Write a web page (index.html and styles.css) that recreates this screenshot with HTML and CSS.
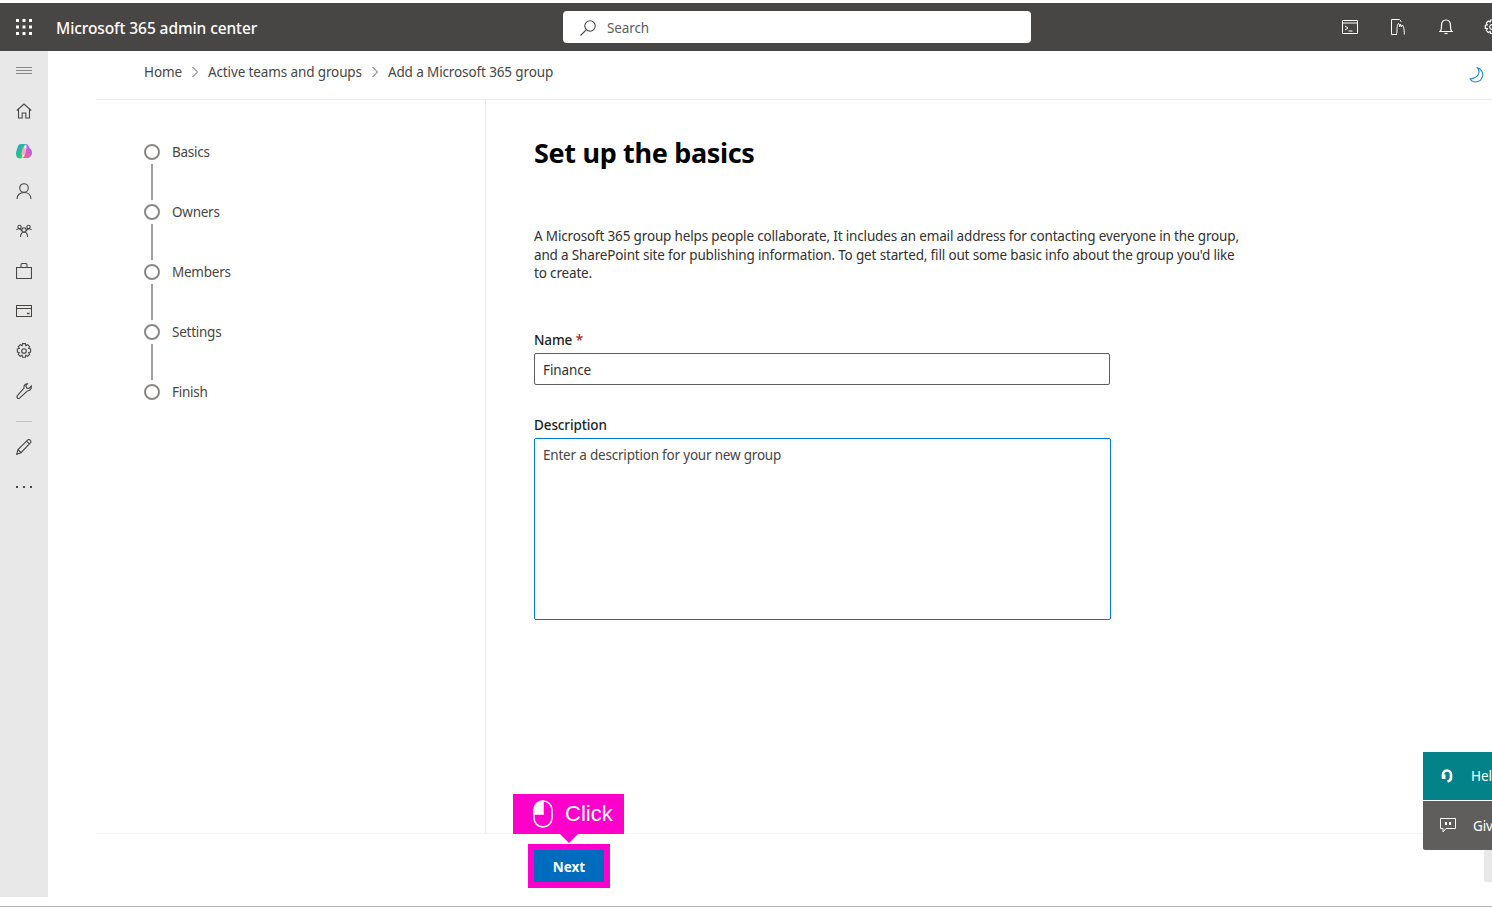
FILE: index.html
```html
<!DOCTYPE html>
<html lang="en">
<head>
    <meta charset="UTF-8">
    <title>Microsoft 365 admin center</title>
    <link rel="stylesheet" href="styles.css">
</head>
<body>
<div class="page">
    <header class="topbar">
        <div class="topbar-left">
            <svg class="waffle" width="16" height="16" viewBox="0 0 16 16" fill="#fff">
                <rect x="0" y="0" width="3" height="3"/><rect x="6.500" y="0" width="3" height="3"/><rect x="13" y="0" width="3" height="3"/>
                <rect x="0" y="6.500" width="3" height="3"/><rect x="6.500" y="6.500" width="3" height="3"/><rect x="13" y="6.500" width="3" height="3"/>
                <rect x="0" y="13" width="3" height="3"/><rect x="6.500" y="13" width="3" height="3"/><rect x="13" y="13" width="3" height="3"/>
            </svg>
            <span class="app-name">Microsoft 365 admin center</span>
        </div>
        <div class="search">
            <svg width="18" height="18" viewBox="0 0 18 18" fill="none" stroke="#484644" stroke-width="1.100">
                <circle cx="11" cy="7" r="5.200"/><path d="M7.200 10.800 1.500 16.500"/>
            </svg>
            <span>Search</span>
        </div>
        <div class="topbar-icons">
            <svg width="16" height="14" viewBox="0 0 16 14" fill="none" stroke="#fff"><path d="M.5.500h15v13H.5zM.5 3h15"/><path d="m3 6 3 2-3 2M6.500 11h4"/></svg>
            <svg width="16" height="16" viewBox="0 0 16 16" fill="none" stroke="#fff"><path d="M7 15.500H1.500V.5h8l1.500 1.500v1"/><path d="M6 15.500c1-1 1-3 1-5s.5-6 1.500-6 1 2.500 1 3.500l1-3 .8 3 1-2c1 1 2 3 2 9.500"/></svg>
            <svg class="bell" width="14" height="16" viewBox="0 0 14 16" fill="none" stroke="#fff" stroke-width="1.200"><path d="M1 12.500h12c-1.500-1-1.500-3-1.500-6C11.500 3 10 1 7 1S2.500 3 2.500 6.500c0 3 0 5-1.500 6Z"/><path d="M5.500 14.500h3"/></svg>
            <svg class="gear-cut" width="16" height="16" viewBox="0 0 16 16" fill="none" stroke="#fff" stroke-width="1.200"><circle cx="8" cy="8" r="2.300"/><path d="M6.600 1h2.800l.4 2 1.800-.9 2 2-1 1.800 2 .5v2.800l-2 .5 1 1.800-2 2-1.800-1-.4 2H6.600l-.5-2-1.800 1-2-2 1-1.800-2-.5V6.400l2-.5-1-1.800 2-2 1.800.9z"/></svg>
        </div>
    </header>

    <div class="shell">
        <nav class="sidenav">
            <div class="nav-item"><svg width="16" height="8" viewBox="0 0 16 8" stroke="#8a8886"><path d="M0 .5h16M0 3.500h16M0 6.500h16"/></svg></div>
            <div class="nav-item"><svg width="16" height="16" viewBox="0 0 16 16" fill="none" stroke="#484644" stroke-width="1.100"><path d="M.8 7.500 8 1l7.200 6.500M2.500 6v9h3.700v-5h3.600v5h3.700V6"/></svg></div>
            <div class="nav-item"><svg width="16" height="16" viewBox="0 0 16 16">
                <defs>
                    <linearGradient id="cop1" x1="0" y1="0" x2="1" y2="1"><stop offset="0" stop-color="#1fa5e0"/><stop offset="0.600" stop-color="#2fc27a"/><stop offset="1" stop-color="#f2b632"/></linearGradient>
                    <linearGradient id="cop2" x1="0" y1="1" x2="1" y2="0"><stop offset="0" stop-color="#f0743e"/><stop offset="0.500" stop-color="#d85ad0"/><stop offset="1" stop-color="#8a6cf0"/></linearGradient>
                </defs>
                <path d="M5 1h6c-2 .5-3 2-3.500 4L6 14c-.3 1-1 1.500-2.500 1.500C1.500 15.500 0 13.500 0 11c0-1.500.3-3 .8-4.500L2 3C2.500 1.800 3.500 1 5 1Z" fill="url(#cop1)"/>
                <path d="M10 1c1 0 1.800.5 2.200 1.500L14 5.500c1.500 1 2 2.500 2 4 0 3-2 5.500-4.500 5.500H5.500c1.500 0 2.500-1 3-2.500L10.500 5c.2-1.500 0-3-.5-4Z" fill="url(#cop2)"/>
                <path d="M6.500 5.500h3.700L9 11.500H5.200Z" fill="#f6a7c8"/>
            </svg></div>
            <div class="nav-item"><svg width="16" height="16" viewBox="0 0 16 16" fill="none" stroke="#484644" stroke-width="1.100"><circle cx="8" cy="5" r="4.300"/><path d="M1 16c0-4 3-6.500 7-6.500s7 2.500 7 6.500"/></svg></div>
            <div class="nav-item"><svg width="16" height="14" viewBox="0 0 16 14" fill="none" stroke="#484644" stroke-width="1.100"><circle cx="3.500" cy="3" r="1.700"/><circle cx="12.500" cy="3" r="1.700"/><circle cx="8" cy="6" r="2.200"/><path d="M.5 6c.5-1 1.500-1.300 3-1.200L6 6.500M15.500 6c-.5-1-1.500-1.300-3-1.200L10 6.500M4.500 13c0-3 1.500-5 3.500-5s3.500 2 3.500 5"/></svg></div>
            <div class="nav-item"><svg width="16" height="16" viewBox="0 0 16 16" fill="none" stroke="#484644" stroke-width="1.100"><path d="M.5 4.500h15v11H.5zM5 4.500V2c0-.8.500-1.500 1.500-1.500h3C10.500.5 11 1.200 11 2v2.500"/></svg></div>
            <div class="nav-item"><svg width="16" height="12" viewBox="0 0 16 12" fill="none" stroke="#484644" stroke-width="1.100"><path d="M.5.500h15v11H.5zM.5 3.500h15"/><path d="M11 8.500h2.500" stroke-width="1.500"/></svg></div>
            <div class="nav-item"><svg width="16" height="16" viewBox="0 0 16 16" fill="none" stroke="#484644" stroke-width="1.100"><circle cx="8" cy="8" r="2.300"/><path d="M6.600 .6h2.800l.4 2 1.800-.9 2 2-1 1.800 2 .5v3l-2 .5 1 1.800-2 2-1.800-1-.4 2H6.600l-.5-2-1.800 1-2-2 1-1.800-2-.5V6l2-.5-1-1.800 2-2 1.800.9z"/></svg></div>
            <div class="nav-item"><svg width="16" height="16" viewBox="0 0 16 16" fill="none" stroke="#484644" stroke-width="1.100"><path d="M11.500.7 9.800 3l1 2.200 2.200.2L15.300 3c.5 2.500-1.200 5-4 5L3.500 15.200c-1.200 1-3.400-.8-2.300-2.400L8 5c-.3-2.500 1-4.300 3.500-4.300Z"/></svg></div>
            <span class="nav-sep"></span>
            <div class="nav-item"><svg width="16" height="16" viewBox="0 0 16 16" fill="none" stroke="#484644" stroke-width="1.100"><path d="M.7 15.300 2 10.500 11.800.9c.8-.6 1.800-.4 2.500.4.7.8.9 1.700.3 2.400L5 13.700ZM2 10.500 5 13.700M10.500 2.200l3.200 3"/></svg></div>
            <div class="nav-item"><svg width="16" height="2" viewBox="0 0 16 2" fill="#484644"><rect x="0" width="2" height="2"/><rect x="7" width="2" height="2"/><rect x="14" width="2" height="2"/></svg></div>
        </nav>

        <main class="main">
            <div class="crumbs">
                <span>Home</span>
                <svg width="8" height="12" viewBox="0 0 8 12" fill="none" stroke="#605e5c"><path d="m1.500 1 5 5-5 5"/></svg>
                <span>Active teams and groups</span>
                <svg width="8" height="12" viewBox="0 0 8 12" fill="none" stroke="#605e5c"><path d="m1.500 1 5 5-5 5"/></svg>
                <span>Add a Microsoft 365 group</span>
                <svg class="moon" width="16" height="16" viewBox="0 0 16 16" fill="none" stroke="#1e88e5" stroke-width="1.100"><path d="M9.500 .8c2.800 3.500 2 10-7.500 11.200 1.800 2.500 5 3.600 8 2.600 4.500-1.500 6-7.500 3.500-11C12.500 2.200 11 1.200 9.500 .8Z"/></svg>
            </div>

            <div class="wizard">
                <ol class="steps">
                    <li class="step">Basics</li>
                    <li class="step">Owners</li>
                    <li class="step">Members</li>
                    <li class="step">Settings</li>
                    <li class="step">Finish</li>
                </ol>
                <section class="form">
                    <h1>Set up the basics</h1>
                    <p class="intro">A Microsoft 365 group helps people collaborate, It includes an email address for contacting everyone in the group, and a SharePoint site for publishing information. To get started, fill out some basic info about the group you'd like to create.</p>
                    <label class="field-label">Name <span class="req">*</span></label>
                    <div class="input">Finance</div>
                    <label class="field-label desc-label">Description</label>
                    <div class="textarea">Enter a description for your new group</div>
                </section>
            </div>

            <footer class="actions">
                <button class="next">Next</button>
            </footer>
        </main>
    </div>
    <div class="bottom-line"></div>

    <div class="callout">
        <svg width="20" height="28" viewBox="0 0 20 28" fill="none" stroke="#fff" stroke-width="1.500"><path d="M10 1a9 9 0 0 0-9 9v4h9z" fill="#fff"/><rect x="1" y="1" width="18" height="26" rx="9"/></svg>
        <span>Click</span>
    </div>
    <div class="help-tabs">
        <div class="help-tab teal">
            <svg width="14" height="16" viewBox="0 0 14 16" fill="none" stroke="#fff" stroke-width="2.600"><path d="M3 10.500V6.500a4 4 0 0 1 8 0V10c0 2-1.500 3-3.500 3.500"/><path d="M2 6.500h3.500v4.500H2z" fill="#fff" stroke="none"/></svg>
            <span>Help &amp; support</span>
        </div>
        <div class="help-tab grey">
            <svg width="16" height="15" viewBox="0 0 16 15" fill="none" stroke="#fff"><path d="M.5.500h15v10H6L3 14v-3.500H.5z"/><path d="M6 4v3M10 4v3" stroke-width="2"/></svg>
            <span>Give feedback</span>
        </div>
    </div>
    <div class="scroll-stub"></div>
</div>
</body>
</html>
```

FILE: styles.css
```css
* {
    margin: 0;
    padding: 0;
    box-sizing: border-box;
    list-style: none;
}

html, body {
    width: 1492px;
    height: 907px;
    overflow: hidden;
    background: #fff;
}

body {
    font-family: "Noto Sans", "Open Sans", sans-serif;
    font-size: 13.500px;
    letter-spacing: -0.120px;
    color: #323130;
}

.page {
    position: relative;
    width: 1492px;
    height: 907px;
    padding-top: 3px;
    overflow: hidden;
}

.topbar {
    height: 48px;
    background: #484644;
    display: flex;
    align-items: center;
    position: relative;
}

.topbar-left {
    display: flex;
    align-items: center;
    padding-left: 16px;
    width: 563px;
}

.app-name {
    margin-left: 24px;
    padding-top: 2px;
    color: #fff;
    font-size: 15.500px;
    letter-spacing: -0.090px;
    font-weight: 500;
}

.search {
    width: 468px;
    height: 32px;
    background: #fff;
    border-radius: 4px;
    display: flex;
    align-items: center;
    gap: 10px;
    padding: 1px 0 0 16px;
    color: #605e5c;
}

.topbar-icons {
    margin-left: auto;
    display: flex;
    align-items: center;
    gap: 32px;
    margin-right: -8px;
}

.bell {
    margin-left: 1px;
    margin-right: -1px;
}

.shell {
    display: flex;
    height: 846px;
}

.sidenav {
    width: 48px;
    background: #e8e8e8;
    display: flex;
    flex-direction: column;
    align-items: center;
    flex-shrink: 0;
}

.nav-item {
    width: 48px;
    height: 40px;
    display: flex;
    align-items: center;
    justify-content: center;
    flex-shrink: 0;
}

.nav-sep {
    width: 16px;
    height: 1px;
    background: #c8c6c4;
    margin: 10px 0 5px;
}

.main {
    flex: 1;
    display: flex;
    flex-direction: column;
    min-width: 0;
}

.crumbs {
    height: 49px;
    margin-left: 48px;
    padding: 0 8px 6px 48px;
    border-bottom: 1px solid #edebe9;
    display: flex;
    align-items: center;
    gap: 9px;
    color: #484644;
}

.moon {
    margin-left: auto;
    margin-top: 6px;
}

.wizard {
    flex: 1;
    display: flex;
    margin-left: 48px;
    min-height: 0;
}

.steps {
    width: 390px;
    border-right: 1px solid #edebe9;
    padding: 42px 0 0 48px;
    flex-shrink: 0;
    letter-spacing: -0.250px;
}

.step {
    position: relative;
    height: 60px;
    padding-left: 28px;
    line-height: 20px;
    color: #484644;
}

.step::before {
    content: "";
    box-sizing: border-box;
    position: absolute;
    left: 0;
    top: 2px;
    width: 16px;
    height: 16px;
    border: 2px solid #8a8886;
    border-radius: 50%;
}

.step:not(:last-child)::after {
    content: "";
    position: absolute;
    left: 7px;
    top: 22px;
    width: 2px;
    height: 36px;
    background: #a19f9d;
}

.form {
    padding: 34px 0 0 48px;
    width: 770px;
}

.form h1 {
    font-size: 27px;
    letter-spacing: -0.330px;
    line-height: 38px;
    font-weight: 700;
    color: #000;
    margin-bottom: 55px;
}

.intro {
    max-width: 712px;
    line-height: 18.500px;
    letter-spacing: -0.160px;
    color: #323130;
    margin-bottom: 47px;
}

.field-label {
    display: block;
    font-weight: 500;
    line-height: 20px;
    color: #201f1e;
}

.req {
    color: #a4262c;
}

.input {
    width: 576px;
    height: 32px;
    margin-top: 3px;
    border: 1px solid #605e5c;
    border-radius: 2px;
    padding-left: 8px;
    line-height: 32px;
}

.desc-label {
    margin-top: 30px;
}

.textarea {
    width: 577px;
    height: 182px;
    margin-top: 3px;
    border: 1px solid #0078d4;
    border-radius: 2px;
    padding: 6px 8px;
    line-height: 20px;
    letter-spacing: -0.200px;
    color: #484644;
}

.actions {
    height: 64px;
    margin-left: 48px;
    border-top: 1px solid #f3f2f1;
    padding: 16px 0 0 438px;
}

.next {
    display: block;
    width: 70px;
    height: 32px;
    padding-top: 2px;
    background: #006cbe;
    color: #fff;
    border: 0;
    font-family: inherit;
    font-size: 13.500px;
    font-weight: 700;
    outline: 6px solid #ff00cc;
}

.bottom-line {
    position: absolute;
    left: 0;
    right: 0;
    bottom: 0;
    height: 1px;
    background: #b5b5b5;
}

.callout {
    position: absolute;
    left: 513px;
    top: 794px;
    width: 111px;
    height: 40px;
    background: #ff00cc;
    display: flex;
    align-items: center;
    padding-left: 20px;
    gap: 12px;
    color: #fff;
    font-family: "Liberation Sans", sans-serif;
    font-size: 22px;
    letter-spacing: 0;
}

.callout::after {
    content: "";
    position: absolute;
    left: 47px;
    top: 40px;
    border: 9px solid transparent;
    border-bottom: 0;
    border-top-color: #ff00cc;
}

.help-tabs {
    position: absolute;
    left: 1423px;
    top: 752px;
    width: 200px;
}

.help-tab {
    height: 48px;
    display: flex;
    align-items: center;
    gap: 17px;
    padding-left: 17px;
    color: #fff;
}

.teal {
    background: #038387;
}

.grey {
    height: 50px;
    background: #605e5c;
    border-top: 1px solid #fff;
    border-bottom-left-radius: 2px;
}

.scroll-stub {
    position: absolute;
    left: 1484px;
    top: 850px;
    width: 8px;
    height: 32px;
    background: #e8e8e8;
    border-radius: 2px 0 0 2px;
}
```
